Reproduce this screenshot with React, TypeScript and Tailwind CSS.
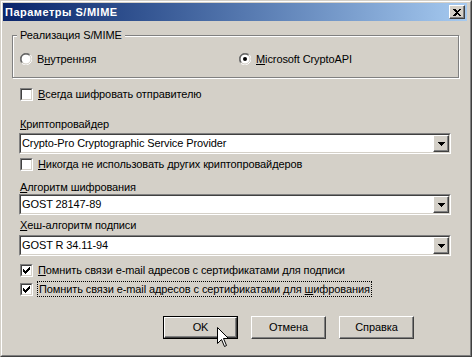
import React from 'react'

const U = ({ children }: { children: React.ReactNode }) => (
  <span className="underline underline-offset-[1px]">{children}</span>
)

const Radio = ({ checked }: { checked?: boolean }) => (
  <svg width="12" height="12" viewBox="0 0 12 12" className="shrink-0">
    <circle cx="6" cy="6" r="5" fill="white" />
    <path d="M10.24 1.76 A6 6 0 0 0 1.76 10.24" stroke="#808080" strokeWidth="1" fill="none" />
    <path d="M10.24 1.76 A6 6 0 0 1 1.76 10.24" stroke="white" strokeWidth="1" fill="none" />
    <path d="M9.54 2.46 A5 5 0 0 0 2.46 9.54" stroke="#404040" strokeWidth="1" fill="none" />
    <path d="M9.54 2.46 A5 5 0 0 1 2.46 9.54" stroke="#d4d0c8" strokeWidth="1" fill="none" />
    {checked && <circle cx="6" cy="6" r="2" fill="black" />}
  </svg>
)

const Check = ({ checked }: { checked?: boolean }) => (
  <div className="w-[13px] h-[13px] shrink-0 border border-t-[#808080] border-l-[#808080] border-b-white border-r-white">
    <div className="w-full h-full flex items-center justify-center bg-white border border-t-[#404040] border-l-[#404040] border-b-[#d4d0c8] border-r-[#d4d0c8]">
      {checked && (
        <svg width="7" height="7" viewBox="0 0 7 7" shapeRendering="crispEdges">
          <rect x="6" y="0" width="1" height="1" />
          <rect x="5" y="1" width="2" height="1" />
          <rect x="0" y="2" width="1" height="1" />
          <rect x="4" y="2" width="3" height="1" />
          <rect x="0" y="3" width="2" height="1" />
          <rect x="3" y="3" width="3" height="1" />
          <rect x="0" y="4" width="5" height="1" />
          <rect x="1" y="5" width="3" height="1" />
          <rect x="2" y="6" width="1" height="1" />
        </svg>
      )}
    </div>
  </div>
)

const Combo = ({ value }: { value: string }) => (
  <div className="ml-[16px] w-[432px] h-[21px] border border-t-[#808080] border-l-[#808080] border-b-white border-r-white">
    <div className="h-full flex items-center bg-white border border-t-[#404040] border-l-[#404040] border-b-[#d4d0c8] border-r-[#d4d0c8]">
      <span className="flex-1 pl-px">{value}</span>
      <div className="w-[16px] h-full flex items-center justify-center bg-[#d4d0c8] border border-t-white border-l-white border-b-[#404040] border-r-[#404040] shadow-[inset_-1px_-1px_0_#808080]">
        <svg width="7" height="4" viewBox="0 0 7 4" shapeRendering="crispEdges">
          <polygon points="0,0 7,0 3.5,4" fill="black" />
        </svg>
      </div>
    </div>
  </div>
)

const Button = ({ children, isDefault }: { children: React.ReactNode; isDefault?: boolean }) =>
  isDefault ? (
    <div className="w-[75px] h-[23px] border border-black">
      <div className="h-full flex items-center justify-center border border-t-white border-l-white border-b-[#404040] border-r-[#404040] shadow-[inset_-1px_-1px_0_#808080]">
        {children}
      </div>
    </div>
  ) : (
    <div className="w-[75px] h-[23px] flex items-center justify-center border border-t-white border-l-white border-b-[#404040] border-r-[#404040] shadow-[inset_-1px_-1px_0_#808080]">
      {children}
    </div>
  )

export default function App() {
  return (
    <div className="relative w-[472px] h-[357px] border border-t-[#d4d0c8] border-l-[#d4d0c8] border-b-[#404040] border-r-[#404040] bg-[#d4d0c8] font-['Liberation_Sans',Arial,sans-serif] text-[11px] leading-[13px] tracking-[-0.1px] text-black">
      <div className="h-full border border-t-white border-l-white border-b-[#808080] border-r-[#808080] pt-px pl-px pr-[3px]">
        {/* title bar */}
        <div className="h-[18px] flex items-center justify-between bg-linear-to-r from-[#0a246a] to-[#a6caf0]">
          <span className="pl-[2px] font-bold tracking-[0.5px] text-white">Параметры S/MIME</span>
          <div className="mr-[2px] w-[16px] h-[14px] flex items-center justify-center bg-[#d4d0c8] border border-t-white border-l-white border-b-[#404040] border-r-[#404040] shadow-[inset_-1px_-1px_0_#808080]">
            <svg width="8" height="7" viewBox="0 0 8 7" shapeRendering="crispEdges">
              <path d="M0 0h2l2 2 2-2h2L5 3.5 8 7H6L4 5 2 7H0l3-3.5z" fill="black" />
            </svg>
          </div>
        </div>

        {/* body */}
        <div className="flex flex-col">
          <fieldset className="ml-[9px] mt-[8px] w-[447px] h-[49px] border border-[#808080] shadow-[1px_1px_0_white,inset_1px_1px_0_white]">
            <legend className="ml-[4px] px-[3px] bg-[#d4d0c8]">Реализация S/MIME</legend>
            <div className="mt-[11px] pl-[7px] flex items-center h-[12px]">
              <label className="w-[219px] flex items-center gap-[5px]">
                <Radio />
                <span>В<U>н</U>утренняя</span>
              </label>
              <label className="flex items-center gap-[5px]">
                <Radio checked />
                <span><U>M</U>icrosoft CryptoAPI</span>
              </label>
            </div>
          </fieldset>

          <label className="mt-[10px] ml-[17px] h-[13px] flex items-center gap-[5px]">
            <Check />
            <span><U>В</U>сегда шифровать отправителю</span>
          </label>

          <div className="mt-[17px] ml-[17px]"><U>К</U>риптопровайдер</div>
          <div className="mt-[2px]">
            <Combo value="Crypto-Pro Cryptographic Service Provider" />
          </div>

          <label className="mt-[4px] ml-[17px] h-[13px] flex items-center gap-[5px]">
            <Check />
            <span><U>Н</U>икогда не использовать других криптопровайдеров</span>
          </label>

          <div className="mt-[10px] ml-[17px]"><U>А</U>лгоритм шифрования</div>
          <Combo value="GOST 28147-89" />

          <div className="mt-[4px] ml-[17px]"><U>Х</U>еш-алгоритм подписи</div>
          <div className="mt-[3px]">
            <Combo value="GOST R 34.11-94" />
          </div>

          <label className="mt-[8px] ml-[17px] h-[13px] flex items-center gap-[5px]">
            <Check checked />
            <span><U>П</U>омнить связи e-mail адресов с сертификатами для подписи</span>
          </label>

          <label className="mt-[4px] ml-[17px] h-[16px] flex items-center gap-[4px]">
            <Check checked />
            <span className="px-px leading-[14px] border border-dotted border-black">
              Помнить связи e-mail адресов с сертификатами для <U>ш</U>ифрования
            </span>
          </label>

          <div className="mt-[19px] pl-[160px] flex gap-[13px]">
            <Button isDefault>OK</Button>
            <Button>Отмена</Button>
            <Button>Справка</Button>
          </div>
        </div>
      </div>

      {/* mouse pointer over OK */}
      <svg className="absolute left-[216px] top-[326px]" width="13" height="21" viewBox="0 0 13 21">
        <polygon
          points="0.5,0.5 0.5,16.5 4.5,12.5 7.5,19.5 9.5,18.5 6.5,11.5 11.5,11.5"
          fill="white"
          stroke="black"
          strokeWidth="1"
          strokeLinejoin="miter"
        />
      </svg>
    </div>
  )
}
